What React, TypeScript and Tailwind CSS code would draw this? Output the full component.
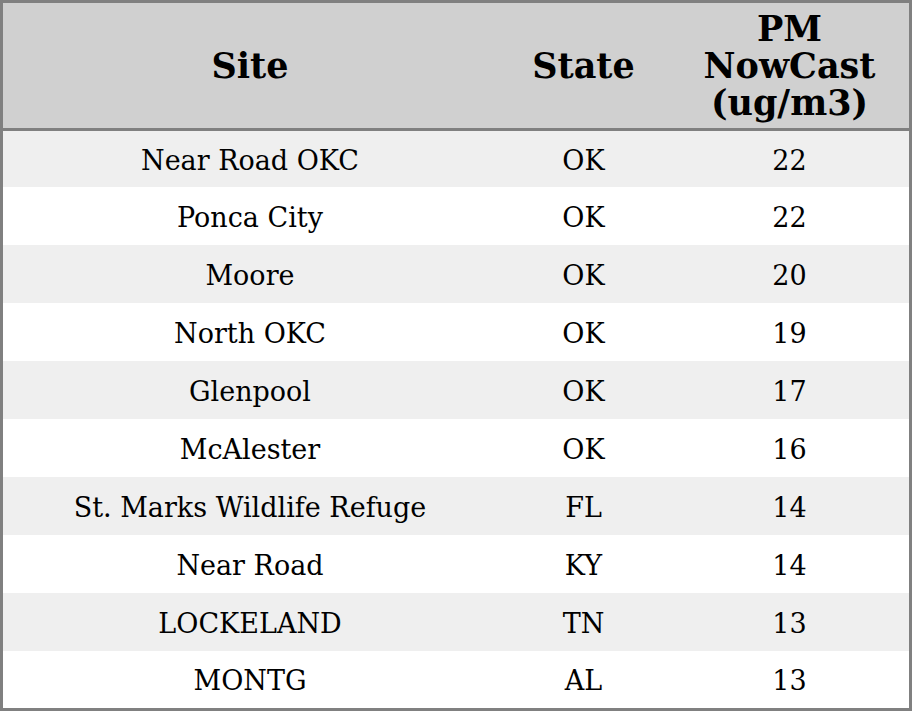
import React from "react";

const rows: [string, string, string][] = [
  ["Near Road OKC", "OK", "22"],
  ["Ponca City", "OK", "22"],
  ["Moore", "OK", "20"],
  ["North OKC", "OK", "19"],
  ["Glenpool", "OK", "17"],
  ["McAlester", "OK", "16"],
  ["St. Marks Wildlife Refuge", "FL", "14"],
  ["Near Road", "KY", "14"],
  ["LOCKELAND", "TN", "13"],
  ["MONTG", "AL", "13"],
];

export default function App() {
  return (
    <div
      className="w-[912px] h-[711px] bg-white"
      style={{ fontFamily: '"DejaVu Serif", serif' }}
    >
      <div className="w-[912px] h-[711px] border-[3px] border-[#808080] flex flex-col">
        <div className="grid grid-cols-[494px_173px_239px] h-[125px] bg-[#d0d0d0] text-black font-bold text-[35px] leading-[37px] text-center">
          <div className="flex items-center justify-center">Site</div>
          <div className="flex items-center justify-center">State</div>
          <div className="flex flex-col items-center justify-center">
            <span>PM</span>
            <span>NowCast</span>
            <span>(ug/m3)</span>
          </div>
        </div>
        <div className="h-[3px] bg-[#808080]" />
        {rows.map((r, i) => {
          const h = i === 0 ? "h-[56px]" : i === rows.length - 1 ? "h-[57px]" : "h-[58px]";
          const bg = i % 2 === 0 ? "bg-[#efefef]" : "bg-white";
          return (
            <div
              key={i}
              className={`grid grid-cols-[494px_173px_239px] ${h} ${bg} pt-[4px] text-black text-[27px] text-center`}
            >
              <div className="flex items-center justify-center">{r[0]}</div>
              <div className="flex items-center justify-center">{r[1]}</div>
              <div className="flex items-center justify-center">{r[2]}</div>
            </div>
          );
        })}
      </div>
    </div>
  );
}
